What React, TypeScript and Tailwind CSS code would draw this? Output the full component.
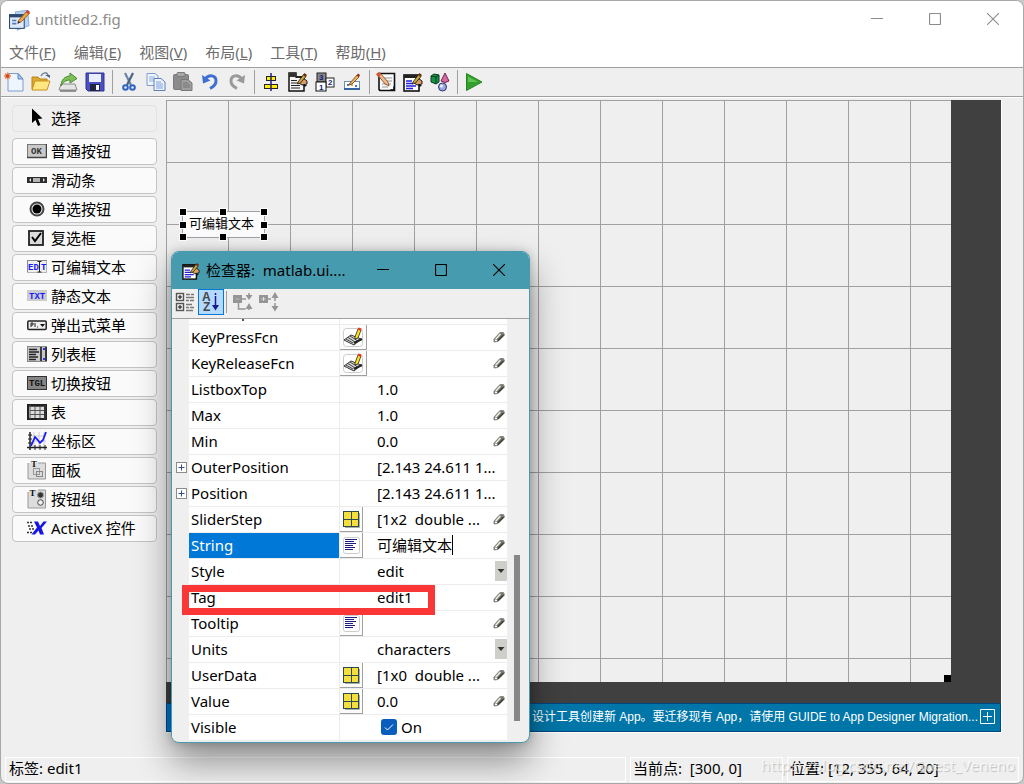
import React, { ReactNode } from "react";

type IconProps = { children: ReactNode; box?: string; className?: string };

const Svg = ({ children, box = "0 0 20 20", className = "h-5 w-5" }: IconProps) => (
  <svg viewBox={box} className={className + " shrink-0"} fill="none" aria-hidden="true">
    {children}
  </svg>
);

// Hand holding a pencil, shared by the editor icons. Fills the top right corner of a 20x20 box.
const Pen = () => (
  <>
    <path d="M12 9 L15 6 L19 9 L19 12 L14 13 L11 11 Z" fill="#d9a066" stroke="#1a1a1a" strokeWidth="1" />
    <path d="M10 10 L15.5 2.5 L18 4.5 L12.5 11 L9.5 12 Z" fill="#c9a23c" stroke="#1a1a1a" strokeWidth="0.8" />
    <path d="M15 3 L16.5 1 L19 3 L17.5 5 Z" fill="#6a3212" />
    <path d="M15 13 L17 15 L19 13" fill="#111" />
  </>
);

const FigIcon = () => (
  <Svg className="h-[21px] w-[21px]">
    <path d="M6 2 L18 0 L19 15 L8 19 Z" fill="#b9d4f3" stroke="#8fb2dc" />
    <rect x="0.5" y="4.5" width="14" height="13" fill="#dfeafa" stroke="#2c4a73" />
    <rect x="0" y="4" width="15" height="3" fill="#2c4a73" />
    <path d="M3 10h4M3 13h4" stroke="#4d7cc0" strokeWidth="1.5" />
    <path d="M9 10 L17 1 L19.5 3 L12 11 L8.5 12.5 Z" fill="#f0a63a" stroke="#7b4a1c" strokeWidth="0.7" />
    <path d="M16 2 L17.5 0 L20 2 L18.5 4 Z" fill="#c8402c" />
    <path d="M8 13 L9 10.5 L11 12 Z" fill="#333" />
  </Svg>
);

const NewIcon = () => (
  <Svg>
    <path d="M4 1.5 H14 L19 7 V19 H4 Z" fill="#eef5ff" stroke="#7d9fd0" />
    <path d="M14 1.5 V7 H19 Z" fill="#a9c7f2" stroke="#5f86bf" />
    <path d="M3.5 0.5v7M0 4h7M1 1.5l5 5M6 1.5l-5 5" stroke="#e58a55" strokeWidth="1.3" />
    <circle cx="3.5" cy="4" r="1.8" fill="#d6441c" />
  </Svg>
);

const OpenIcon = () => (
  <Svg>
    <path d="M1 5 H7 L9 7 H16 V17 H1 Z" fill="#dca92e" stroke="#b9831a" />
    <path d="M4 9 H19 L16 18 H1 Z" fill="#ffe680" stroke="#c69220" />
    <path d="M10 4 C12 0 16 0 17 3" stroke="#6b8099" strokeWidth="1.5" />
    <path d="M14 3 H19 V6 Z" fill="#506a88" />
  </Svg>
);

const ShareIcon = () => (
  <Svg>
    <path d="M3 12 H17 L19 18 H1 Z" fill="#e5e5e5" stroke="#8c8c8c" />
    <path d="M2 19 H18" stroke="#777" strokeWidth="1.5" />
    <path d="M3 14 C3 8 7 4 12 4 V1 L19 6.5 L12 11 V8 C8 8 5 10 3 14 Z" fill="#7ec257" stroke="#4b8a35" />
  </Svg>
);

const SaveIcon = () => (
  <Svg>
    <path d="M1 1 H19 V19 H3 L1 17 Z" fill="#4a50c4" stroke="#2f3290" />
    <rect x="4" y="2" width="12" height="8" fill="#e8eefc" />
    <rect x="5" y="12" width="10" height="7" fill="#22253f" />
    <rect x="11" y="13" width="3" height="5" fill="#f5f5f5" />
  </Svg>
);

const CutIcon = () => (
  <Svg>
    <path d="M6 1 L12 13" stroke="#6f86a3" strokeWidth="2.2" />
    <path d="M14 1 L8 13" stroke="#4a6588" strokeWidth="2.2" />
    <circle cx="6.5" cy="15.5" r="2.3" stroke="#2e62c4" strokeWidth="2" />
    <circle cx="13.5" cy="15.5" r="2.3" stroke="#2e62c4" strokeWidth="2" />
  </Svg>
);

const CopyIcon = () => (
  <Svg>
    <path d="M1 1.5 H9 L12 4 V13.5 H1 Z" fill="#eef4fd" stroke="#7f9dcb" />
    <path d="M3 5h6M3 7h6M3 9h5" stroke="#8fb0df" />
    <path d="M8 6.5 H15 L19 10 V18.5 H8 Z" fill="#eef4fd" stroke="#5e7fb5" />
    <path d="M10 10h5M10 12h7M10 14h7M10 16h7" stroke="#7aa0db" />
  </Svg>
);

const PasteIcon = () => (
  <Svg>
    <rect x="0.5" y="2.5" width="15" height="15" rx="1" fill="#8c8c8c" stroke="#7b7b7b" />
    <rect x="4" y="0.5" width="8" height="4" rx="1" fill="#a8a8a8" stroke="#7b7b7b" />
    <path d="M8 7.5 H15 L19 11 V18.5 H8 Z" fill="#9f9f9f" stroke="#787878" />
    <path d="M10 11h5M10 13h7M10 15h7" stroke="#777" />
  </Svg>
);

const UndoIcon = () => (
  <Svg>
    <path d="M5 7 C9 2 16 3 16 9 C16 12.5 14 14.5 10 16.5" stroke="#3f6fd0" strokeWidth="3" />
    <path d="M2 3 L3 11.5 L10.5 8.5 Z" fill="#3f6fd0" />
  </Svg>
);

const RedoIcon = () => (
  <Svg>
    <path d="M15 7 C11 2 4 3 4 9 C4 12.5 6 14.5 10 16.5" stroke="#999" strokeWidth="3" />
    <path d="M18 3 L17 11.5 L9.5 8.5 Z" fill="#999" />
  </Svg>
);

const AlignIcon = () => (
  <Svg>
    <rect x="5.5" y="4.5" width="9" height="4" fill="#ffee00" stroke="#222" />
    <rect x="3.5" y="12.5" width="13" height="4" fill="#ffee00" stroke="#222" />
    <path d="M10 1 V19" stroke="#1d1d8c" strokeWidth="1.5" />
  </Svg>
);

const MenuEditorIcon = () => (
  <Svg>
    <path d="M1 1 H8 V5 H16 V19 H1 Z" fill="#f5f5f5" stroke="#111" strokeWidth="1.5" />
    <rect x="1" y="1" width="7" height="4" fill="#333" />
    <path d="M8 5h9" stroke="#222" strokeWidth="2" />
    <path d="M3 8.5h6M3 11h7M3 13.5h9M3 16h9" stroke="#222" strokeWidth="1.2" />
    <Pen />
  </Svg>
);

const TabOrderIcon = () => (
  <Svg>
    <rect x="2" y="1" width="9" height="9" fill="#888" stroke="#222" />
    <rect x="11" y="6" width="8" height="9" fill="#fff" stroke="#222" />
    <rect x="1" y="10" width="10" height="9" fill="#fff" stroke="#111" />
    <text x="4" y="8" fontSize="8" fontWeight="700" fill="#111a7a" fontFamily="Liberation Sans, sans-serif">3</text>
    <text x="13" y="13" fontSize="8" fontWeight="700" fill="#111a7a" fontFamily="Liberation Sans, sans-serif">2</text>
    <text x="4" y="18" fontSize="8" fontWeight="700" fill="#111a7a" fontFamily="Liberation Sans, sans-serif">1</text>
  </Svg>
);

const ToolbarEditorIcon = () => (
  <Svg>
    <rect x="2.5" y="9.5" width="15" height="8" fill="#fff" stroke="#6f8fb5" />
    <path d="M2 17h16" stroke="#35679e" strokeWidth="2" />
    <path d="M5 12h2v2H5zM13 13h2v2h-2z" fill="#3d7ad0" />
    <path d="M9 12h2v2H9z" fill="#e6b422" />
    <path d="M8 11 L15 3 L17 5 L10 12 L7 13 Z" fill="#f3b45c" stroke="#6d3e15" strokeWidth="0.8" />
    <path d="M14.5 3.5 L16 1.5 L18 3 L17 5 Z" fill="#8f2b1c" />
  </Svg>
);

const ScriptIcon = () => (
  <Svg>
    <path d="M3 1.5 H18.500 V18.500 H5 Q3 18.500 3 17 Z" fill="#fafafa" stroke="#111" strokeWidth="1.6" />
    <path d="M7 6h9M9 9h7M6 12h9M6 15h6" stroke="#999" />
    <path d="M13 19 L19 13 V19 Z" fill="#111" />
    <circle cx="16" cy="16" r="1.3" fill="#fff" />
    <path d="M1 2 L4 1 L12 10 L13 14 L9 12 Z" fill="#f3b887" stroke="#79421e" strokeWidth="0.8" />
    <path d="M0 2 L3 0 L5 3 L2 5 Z" fill="#d4572f" />
  </Svg>
);

const InspectorIcon = ({ className = "h-5 w-5" }: { className?: string }) => (
  <Svg className={className}>
    <rect x="1" y="3" width="15" height="16" fill="#fff" stroke="#111" strokeWidth="1.6" />
    <rect x="1" y="3" width="15" height="3" fill="#222" />
    <path d="M3 9h6M3 11.5h7M3 14h10M3 16.5h7" stroke="#2020dd" strokeWidth="1.4" />
    <Pen />
  </Svg>
);

const ObjectsIcon = () => (
  <Svg>
    <path d="M1 4 L4 2 L9 3 V10 L6 12 L1 10 Z" fill="#149447" stroke="#0b3b20" />
    <path d="M1 4 L6 5 L9 3 M6 5 V12" stroke="#0b3b20" />
    <path d="M15 1 L19 9 Q15 12 11 9 Z" fill="#d76aa5" stroke="#702750" />
    <circle cx="12.500" cy="15" r="4" fill="#9aa8e0" stroke="#2c3670" />
    <circle cx="11.500" cy="14" r="1.500" fill="#f2f4ff" />
  </Svg>
);

const RunIcon = () => (
  <Svg>
    <path d="M2.500 1.500 L18 10 L2.500 18.500 Z" fill="#32a02c" stroke="#2a8426" />
    <path d="M4 4.500 L14 10 H4 Z" fill="#62c355" />
  </Svg>
);

const iconText = { fontFamily: "Liberation Mono, monospace", fontWeight: 700 } as const;

// Palette icons, one for each component type
const paletteIcons: Record<string, ReactNode> = {
  select: <path d="M5 0.500 L5 15 L8.500 12 L11 18 L13.500 17 L11 11 L15.500 10.500 Z" fill="#000" />,
  push: (
    <>
      <rect x="0.500" y="3.500" width="19" height="13" fill="#c9c9c9" stroke="#777" />
      <path d="M0 16.500 H19.500 V3" stroke="#444" strokeWidth="1.500" />
      <text x="4" y="13" fontSize="9" fill="#333" {...iconText}>OK</text>
    </>
  ),
  slider: (
    <>
      <rect x="0" y="7" width="20" height="6" fill="#2c2c2c" />
      <rect x="6" y="8" width="7" height="4" fill="#b5b5b5" />
      <path d="M2 10 L4 8 V12 Z M18 10 L16 8 V12 Z" fill="#ddd" />
    </>
  ),
  radio: (
    <>
      <circle cx="10" cy="10" r="6.500" fill="#eee" stroke="#444" strokeWidth="2" />
      <circle cx="10" cy="10" r="4.500" fill="#000" />
    </>
  ),
  check: (
    <>
      <rect x="2" y="3" width="14" height="14" fill="#dcdcdc" stroke="#222" strokeWidth="1.800" />
      <path d="M5 9 L8 13 L14 5" stroke="#000" strokeWidth="2" />
    </>
  ),
  edit: (
    <>
      <rect x="0.500" y="3.500" width="19" height="12" fill="#eee" stroke="#b5b5b5" />
      <path d="M0 3.500 H20 M0.500 3 V15" stroke="#888" />
      <text x="1" y="12.500" fontSize="9" fill="#1a1aff" {...iconText}>ED</text>
      <text x="14" y="12.500" fontSize="9" fill="#1a1aff" {...iconText}>T</text>
      <path d="M10.500 4.500 H14.500 M12.500 4.500 V15 M10.500 15 H14.500" stroke="#222" />
    </>
  ),
  text: (
    <>
      <rect x="0" y="4" width="20" height="11" fill="#ccc" />
      <text x="2" y="12.500" fontSize="9" fill="#1a1aff" {...iconText}>TXT</text>
    </>
  ),
  popup: (
    <>
      <rect x="0.800" y="6" width="18.400" height="8.500" rx="1" fill="#eee" stroke="#222" strokeWidth="1.500" />
      <path d="M4 12V8h2v2H4M8 8v4M10 12h1" stroke="#222" />
      <path d="M13 9 H18 L15.500 12 Z" fill="#111" />
    </>
  ),
  list: (
    <>
      <rect x="0.500" y="2.500" width="19" height="15" fill="#c6c6c6" stroke="#888" />
      <path d="M2 5.500h8M2 8h10M2 10.500h7M2 13h9M2 15.500h7" stroke="#222" strokeWidth="1.300" />
      <path d="M14 3v14M19 3v14" stroke="#111" strokeWidth="1.500" />
      <path d="M16 5h2M16 15h2" stroke="#33f" strokeWidth="2" />
    </>
  ),
  toggle: (
    <>
      <rect x="0.500" y="3.500" width="19" height="13" fill="#858585" stroke="#333" />
      <text x="2" y="13" fontSize="9" fill="#111" {...iconText}>TGL</text>
    </>
  ),
  table: (
    <>
      <rect x="1" y="3" width="18" height="14" fill="#ddd" stroke="#222" strokeWidth="2" />
      <path d="M2 4.500H18M3 3V17M8 4V16M13 4V16M3 8.500H18M3 12.500H18" stroke="#555" />
      <path d="M18 3V17" stroke="#333" strokeWidth="2" />
    </>
  ),
  axes: (
    <>
      <path d="M7 1v16M12 1v16M17 1v16M3 5h16M3 10h16" stroke="#ccc" />
      <path d="M3 1 V19 M0 16.500 H20" stroke="#222" strokeWidth="1.500" />
      <path d="M1 4h4M1 8h4M1 12h4M8 14v5M13 14v5M18 14v5" stroke="#222" />
      <path d="M4 15 L8 6 L10 8 L13 12 L16 9 L19 1" stroke="#1a1aff" strokeWidth="1.800" />
    </>
  ),
  panel: (
    <>
      <path d="M1 3 V19 H18.500 V3 H11" fill="#ddd" stroke="#999" />
      <text x="4" y="7" fontSize="9" fill="#111" fontFamily="Liberation Serif, serif" fontWeight="700">T</text>
      <rect x="6.500" y="8.500" width="6" height="6" stroke="#999" />
      <rect x="9.500" y="11.500" width="6" height="5" stroke="#888" />
    </>
  ),
  group: (
    <>
      <path d="M1 3 V19 H18.500 V1 H11" fill="#ddd" stroke="#999" />
      <text x="2.500" y="7" fontSize="9" fill="#111" fontFamily="Liberation Serif, serif" fontWeight="700">T</text>
      <circle cx="13.500" cy="6" r="3" fill="#333" stroke="#999" />
      <circle cx="13.500" cy="13.500" r="2.800" fill="#eee" stroke="#444" />
    </>
  ),
  activex: (
    <>
      <path d="M0 4.500h6M1 8h6M2 11h5M0 14.500h6" stroke="#333" strokeDasharray="2 1" strokeWidth="1.300" />
      <path d="M7 3.500 H11 L13 8 L16.500 3.500 H20 L14.500 10 L17 16.500 H13 L11.500 12.500 L8 16.500 H4.500 L10 9.500 Z" fill="#1414e6" />
    </>
  ),
};

const palette = [
  { icon: "push", label: "普通按钮" },
  { icon: "slider", label: "滑动条" },
  { icon: "radio", label: "单选按钮" },
  { icon: "check", label: "复选框" },
  { icon: "edit", label: "可编辑文本" },
  { icon: "text", label: "静态文本" },
  { icon: "popup", label: "弹出式菜单" },
  { icon: "list", label: "列表框" },
  { icon: "toggle", label: "切换按钮" },
  { icon: "table", label: "表" },
  { icon: "axes", label: "坐标区" },
  { icon: "panel", label: "面板" },
  { icon: "group", label: "按钮组" },
  { icon: "activex", label: "ActiveX 控件" },
];

const menus = [
  ["文件", "F"],
  ["编辑", "E"],
  ["视图", "V"],
  ["布局", "L"],
  ["工具", "T"],
  ["帮助", "H"],
];

const toolGroups: [string, ReactNode][][] = [
  [["新建", <NewIcon />], ["打开", <OpenIcon />], ["导出", <ShareIcon />], ["保存", <SaveIcon />]],
  [["剪切", <CutIcon />], ["复制", <CopyIcon />], ["粘贴", <PasteIcon />], ["撤消", <UndoIcon />], ["重做", <RedoIcon />]],
  [["对齐", <AlignIcon />], ["菜单编辑器", <MenuEditorIcon />], ["Tab 键顺序", <TabOrderIcon />], ["工具栏编辑器", <ToolbarEditorIcon />]],
  [["编辑器", <ScriptIcon />], ["属性检查器", <InspectorIcon />], ["对象浏览器", <ObjectsIcon />]],
  [["运行", <RunIcon />]],
];

type Property = {
  name: string;
  value?: string;
  editor?: "callback" | "matrix" | "text";
  kind?: "select" | "check" | "input";
  expandable?: boolean;
  marked?: boolean;
};

const properties: Property[] = [
  { name: "Interruptible" },
  { name: "KeyPressFcn", editor: "callback" },
  { name: "KeyReleaseFcn", editor: "callback" },
  { name: "ListboxTop", value: "1.0" },
  { name: "Max", value: "1.0" },
  { name: "Min", value: "0.0" },
  { name: "OuterPosition", value: "[2.143 24.611 1...", expandable: true },
  { name: "Position", value: "[2.143 24.611 1...", expandable: true },
  { name: "SliderStep", value: "[1x2  double ...", editor: "matrix" },
  { name: "String", value: "可编辑文本", editor: "text", kind: "input" },
  { name: "Style", value: "edit", kind: "select" },
  { name: "Tag", value: "edit1", marked: true },
  { name: "Tooltip", editor: "text" },
  { name: "Units", value: "characters", kind: "select" },
  { name: "UserData", value: "[1x0  double ...", editor: "matrix" },
  { name: "Value", value: "0.0", editor: "matrix" },
  { name: "Visible", value: "On", kind: "check" },
];

function WindowButtons() {
  return (
    <div className="flex h-full pr-px pb-0.5">
      <button aria-label="最小化" className="flex w-[58px] items-center justify-center">
        <Svg box="0 0 12 12" className="h-3 w-3"><path d="M0 5.500h12" stroke="currentColor" /></Svg>
      </button>
      <button aria-label="最大化" className="flex w-[58px] items-center justify-center">
        <Svg box="0 0 12 12" className="h-3 w-3"><rect x="0.500" y="0.500" width="11" height="11" rx="1" stroke="currentColor" strokeWidth="1.200" /></Svg>
      </button>
      <button aria-label="关闭" className="flex w-[58px] items-center justify-center">
        <Svg box="0 0 12 12" className="h-3 w-3"><path d="M0 0 L12 12 M12 0 L0 12" stroke="currentColor" strokeWidth="1.100" /></Svg>
      </button>
    </div>
  );
}

function Toolbar() {
  return (
    <div className="flex h-[30px] shrink-0 items-center border-y border-[#a0a0a0] bg-[#efefef]">
      {toolGroups.map((group, i) => (
        <React.Fragment key={i}>
          {i > 0 && <div className="mx-[3px] h-6 w-px bg-[#a0a0a0]" />}
          {group.map(([label, icon]) => (
            <button key={label} aria-label={label} className="flex w-[27px] justify-center pr-0.5">
              {icon}
            </button>
          ))}
        </React.Fragment>
      ))}
    </div>
  );
}

function Palette() {
  return (
    <aside className="flex w-[165px] shrink-0 flex-col gap-0.5 pt-[5px] pr-[9px] pl-[11px]">
      <button className="mb-1 flex h-[27px] items-center gap-1 rounded-sm border border-[#e2e2e2] bg-[#efefef] pb-0.5 pl-3.5">
        <Svg>{paletteIcons.select}</Svg>
        选择
      </button>
      {palette.map((item) => (
        <button key={item.icon} className="flex h-[27px] items-center gap-1 rounded-sm border border-[#c4c4c4] bg-[#fafafa] pb-0.5 pl-3.5">
          <Svg>{paletteIcons[item.icon]}</Svg>
          {item.label}
        </button>
      ))}
    </aside>
  );
}

const handles = [
  "-left-[3px] -top-[3px]",
  "left-[37px] -top-[3px]",
  "-right-[3px] -top-[3px]",
  "-left-[3px] top-[10px]",
  "-right-[3px] top-[10px]",
  "-left-[3px] -bottom-[3px]",
  "left-[37px] -bottom-[3px]",
  "-right-[3px] -bottom-[3px]",
];

function Canvas() {
  return (
    <main className="mr-[21px] mb-[24px] flex min-w-0 flex-1 flex-col border-r border-b border-white">
      <div className="flex flex-1 bg-[#404040] pr-[50px] pb-[21px]">
        <div className="relative flex-1 bg-[#efefef] bg-[linear-gradient(to_right,#a0a0a0_1px,transparent_1px),linear-gradient(to_bottom,#a0a0a0_1px,transparent_1px)] bg-[size:62px_62px]">
          <div className="absolute top-[111px] left-4 flex h-[27px] w-[83px] items-center border border-[#a0a0a8] bg-[#fcfcfc] pb-[3px] pl-1.5 text-[13px]">
            可编辑文本
            {handles.map((h) => (
              <span key={h} className={"absolute size-1.5 bg-black outline outline-white " + h} />
            ))}
          </div>
          <span className="absolute right-0 bottom-0 size-[7px] bg-black" />
        </div>
      </div>
      <div className="flex h-[29px] items-center justify-end overflow-hidden border border-[#00467f] bg-[#0076a8] font-['Liberation_Sans','Noto_Sans_CJK_SC',sans-serif] text-xs whitespace-nowrap text-white">
        <div className="mr-auto h-full w-8 bg-[#0078d7]" />
        <span className="pb-px">设计工具创建新 App。要迁移现有 App，请使用 GUIDE to App Designer Migration...</span>
        <button aria-label="展开" className="mr-[5px] mb-0.5 ml-0.5 flex">
          <Svg box="0 0 15 15" className="h-[15px] w-[15px]">
            <path d="M0.500 0.500h14v14h-14zM7.500 3v9M3 7.500h9" stroke="#fff" />
          </Svg>
        </button>
      </div>
    </main>
  );
}

const PencilIcon = () => (
  <Svg box="0 0 12 14" className="h-3.5 w-3">
    <path d="M1 9 L7 2.500 L10.500 2.500 L11.500 5 L5 11.500 L1 12 Z" fill="#77776f" stroke="#8a8a80" />
    <path d="M2.500 9.500 L7.500 4" stroke="#f4f4ee" strokeWidth="1.300" />
    <path d="M5 10.500 L10.500 5" stroke="#3c3c36" strokeWidth="1.200" />
    <path d="M2 10.500h2" stroke="#fff" />
  </Svg>
);

const CallbackIcon = () => (
  <Svg className="h-5 w-5">
    <rect x="0.500" y="1.500" width="19" height="18" rx="3" fill="#fff" stroke="#ccc" />
    <path d="M1 13 L8 8 L18 12 L11 18 Z" fill="#d7d7d7" stroke="#333" />
    <path d="M3 12 L10 16 M5 10.500 L12 15 M7 9 L14 13.500" stroke="#444" />
    <path d="M11 16 L19 12" stroke="#222" strokeWidth="2" />
    <path d="M12 10 L15 2 L18 3 L15 11 L12 12 Z" fill="#ffe21a" stroke="#222" strokeWidth="0.800" />
    <path d="M14.500 2.500 L15.500 0.500 L18.500 1.500 L18 4 Z" fill="#e33b1c" />
  </Svg>
);

const MatrixIcon = () => (
  <Svg box="0 0 17 17" className="h-[17px] w-[17px]">
    <rect x="0.500" y="0.500" width="15" height="15" fill="#f5df3c" stroke="#2f4a4a" />
    <path d="M8.500 1v14M1 8.500h14" stroke="#2f4a4a" />
    <path d="M16.500 2v14.500H2" stroke="#aaa" />
  </Svg>
);

const TextIcon = () => (
  <Svg box="0 0 17 17" className="h-[17px] w-[17px]">
    <rect x="0.500" y="0.500" width="16" height="16" rx="2" fill="#fff" stroke="#ccc" />
    <path d="M2 2.500h12M2 4.500h9M2 6.500h11M2 8.500h8M2 10.500h10M2 12.500h8" stroke="#1c1c80" />
  </Svg>
);

const editors = {
  callback: <CallbackIcon />,
  matrix: <MatrixIcon />,
  text: <TextIcon />,
};

function PropertyValue({ prop }: { prop: Property }) {
  if (prop.kind === "check") {
    return (
      <label className="flex items-center gap-1 pl-1">
        <input type="checkbox" defaultChecked className="peer sr-only" />
        <span className="flex size-4 items-center justify-center rounded-[3px] bg-[#0a5ebd]">
          <Svg box="0 0 10 10" className="size-2.5"><path d="M1 5.500 L3.500 8 L9 2.500" stroke="#fff" /></Svg>
        </span>
        {prop.value}
      </label>
    );
  }
  if (prop.kind === "select") {
    return (
      <select aria-label={prop.name} defaultValue={prop.value} className="w-full appearance-none bg-transparent">
        <option>{prop.value}</option>
      </select>
    );
  }
  if (prop.kind === "input") {
    return (
      <span className="flex items-center">
        <input aria-label={prop.name} defaultValue={prop.value} className="w-[75px] bg-transparent outline-none" />
        <span className="h-5 w-px bg-black" />
      </span>
    );
  }
  return <span className="whitespace-pre">{prop.value}</span>;
}

function PropertyRow({ prop }: { prop: Property }) {
  const selected = prop.name === "String";
  const hasPencil = prop.kind === "input" || (!prop.kind && !prop.expandable);

  return (
    <tr className="h-[26px]">
      <td className="bg-[#efefef] pb-0.5 pl-1">
        {prop.expandable && (
          <button aria-label={"展开 " + prop.name} className="flex">
            <Svg box="0 0 11 11" className="size-[11px]">
              <rect x="0.500" y="0.500" width="10" height="10" fill="#fff" stroke="#8c8c8c" />
              <path d="M2.500 5.500h6M5.500 2.500v6" stroke="#334f8f" />
            </Svg>
          </button>
        )}
      </td>
      <td className={"relative border-r border-b border-[#ececec] pb-0.5 pl-0.5 " + (selected ? "bg-[#0078d7] text-white" : "bg-white")}>
        {prop.name}
        {prop.marked && <span className="absolute top-0 -left-[7px] z-10 h-[30px] w-[253px] border-[7px] border-[#fb3636]" />}
      </td>
      <td className="border-b border-[#ececec] bg-white">
        {prop.editor && (
          <button
            aria-label={"编辑 " + prop.name}
            className={"flex h-[25px] items-center justify-center border-r border-b border-[#a0a0a0] bg-[#fcfcfc] " + (prop.editor === "callback" ? "w-[27px]" : "w-[23px]")}
          >
            {editors[prop.editor]}
          </button>
        )}
      </td>
      <td className="border-b border-[#ececec] bg-white pb-0.5 pl-2.5 whitespace-nowrap">
        <PropertyValue prop={prop} />
      </td>
      <td className="border-b border-[#ececec] bg-white pb-0.5">
        {prop.kind === "select" && (
          <div className="ml-auto flex h-5 w-3 items-center justify-center bg-[#cfcfca]">
            <Svg box="0 0 8 4" className="h-1 w-2"><path d="M0.500 0 H7.500 L4 4 Z" fill="#333" /></Svg>
          </div>
        )}
        {hasPencil && <PencilIcon />}
      </td>
    </tr>
  );
}

function Inspector() {
  return (
    <section className="absolute top-[250px] left-[170px] flex h-[492px] w-[359px] flex-col overflow-hidden rounded-lg border border-[#479bae] bg-[#efefef] shadow-[0_18px_36px_rgba(0,0,0,0.42),0_0_10px_rgba(0,0,0,0.2)]">
      <header className="flex h-[37px] shrink-0 items-center bg-[#479bae] pl-2.5 text-black">
        <InspectorIcon className="h-[18px] w-[18px]" />
        <h2 className="ml-1.5 flex-1 truncate pb-0.5 whitespace-pre">检查器:  matlab.ui....</h2>
        <WindowButtons />
      </header>
      <div className="flex h-[30px] shrink-0 items-start border-b border-[#a0a0a0]">
        <button aria-label="按类别" className="flex h-[26px] w-[26px] items-center justify-center">
          <Svg>
            <rect x="1.500" y="1.500" width="7" height="7" fill="#eee" stroke="#555" strokeWidth="1.400" />
            <rect x="1.500" y="11.500" width="7" height="7" fill="#eee" stroke="#555" strokeWidth="1.400" />
            <path d="M3 5h4M5 3v4M3 15h4M5 13v4" stroke="#111" />
            <path d="M11 2.500h4M16 2.500h3M11 5.500h8M11 8.500h3M15 8.500h4M11 12.500h6M11 15.500h3M15 15.500h4M11 18.500h7" stroke="#777" strokeWidth="1.300" />
          </Svg>
        </button>
        <button aria-label="按字母" className="flex h-[26px] w-[26px] items-center justify-center border border-[#0078d7] bg-[#b3dafc]">
          <Svg>
            <text x="1" y="9" fontSize="12" fontWeight="700" fill="#444" fontFamily="Liberation Sans, sans-serif">A</text>
            <text x="2" y="19" fontSize="12" fontWeight="700" fill="#444" fontFamily="Liberation Sans, sans-serif">Z</text>
            <path d="M14.500 1 V3 M14.500 4 V15" stroke="#1a1a90" strokeWidth="1.500" />
            <path d="M11 13 H18 L14.500 18.500 Z" fill="#1a1a90" />
          </Svg>
        </button>
        <div className="mr-[3px] ml-0.5 mt-0.5 h-[22px] w-px bg-[#a0a0a0]" />
        <button aria-label="全部折叠" disabled className="flex h-[26px] w-[26px] items-center justify-center">
          <Svg>
            <rect x="0" y="3" width="9" height="8" fill="#959595" />
            <path d="M2.500 7h4" stroke="#bbb" />
            <path d="M9 7h4M5.500 11v6h7M16 1v3M16 15v3" stroke="#959595" strokeWidth="1.500" />
            <path d="M12.500 3h7L16 8ZM12.500 17h7L16 11Z" fill="#959595" />
          </Svg>
        </button>
        <button aria-label="全部展开" disabled className="flex h-[26px] w-[26px] items-center justify-center">
          <Svg>
            <rect x="0" y="3" width="9" height="8" fill="#959595" />
            <path d="M2.500 7h4M4.500 5v4" stroke="#ddd" />
            <path d="M9 7h3M16 5v4M16 11v4" stroke="#959595" strokeWidth="1.500" />
            <path d="M12.500 6h7L16 0ZM12.500 14h7L16 19.500Z" fill="#959595" />
          </Svg>
        </button>
      </div>
      <div className="flex min-h-0 flex-1">
        <div className="flex min-w-0 flex-1 flex-col justify-end overflow-hidden pb-px">
          <table className="w-full table-fixed border-separate border-spacing-0 text-left">
            <colgroup>
              <col className="w-[17px]" />
              <col className="w-[151px]" />
              <col className="w-[27px]" />
              <col />
              <col className="w-3.5" />
            </colgroup>
            <tbody>
              {properties.map((p) => (
                <PropertyRow key={p.name} prop={p} />
              ))}
            </tbody>
          </table>
        </div>
        <div className="flex w-[22px] flex-col items-center justify-end pr-0.5 pb-[21px]">
          <div className="h-[166px] w-1.5 bg-[#878787]" />
        </div>
      </div>
    </section>
  );
}

export default function App() {
  return (
    <div className="h-screen bg-[#c8c8c8] font-['Noto_Sans','Noto_Sans_CJK_SC',sans-serif] text-[15px] leading-5 text-black">
      <div className="relative flex h-full flex-col overflow-hidden rounded-lg border border-[#a8a8a8] bg-[#efefef]">
        <header className="flex h-[38px] shrink-0 items-center bg-white pl-2 text-[#8c8c8c]">
          <FigIcon />
          <h1 className="ml-[5px] flex-1 pb-0.5">untitled2.fig</h1>
          <WindowButtons />
        </header>
        <nav className="flex h-7 shrink-0 items-center gap-[18px] bg-white pb-0.5 pl-2 text-[#6c6c6c]">
          {menus.map(([label, key]) => (
            <button key={key}>
              {label}(<span className="underline">{key}</span>)
            </button>
          ))}
        </nav>
        <Toolbar />
        <div className="flex min-h-0 flex-1 border-t border-white pt-0.5">
          <Palette />
          <Canvas />
        </div>
        <footer className="mr-1 mb-px ml-1 flex h-[25px] shrink-0 gap-1">
          <div className="flex flex-1 items-center border border-white pb-[3px] pl-[3px]">标签: edit1</div>
          <div className="flex w-[153px] items-center border border-white pb-[3px] pl-0.5 whitespace-pre">当前点:  [300, 0]</div>
          <div className="flex w-[232px] items-center border border-white pb-[3px] pl-0.5">位置: [12, 355, 64, 20]</div>
        </footer>
        <Inspector />
        <span className="pointer-events-none absolute right-2 bottom-2 text-white/70 [text-shadow:1px_1px_1px_rgba(0,0,0,0.2)]">
          https://blog.csdn.net/Guest_Veneno
        </span>
      </div>
    </div>
  );
}
